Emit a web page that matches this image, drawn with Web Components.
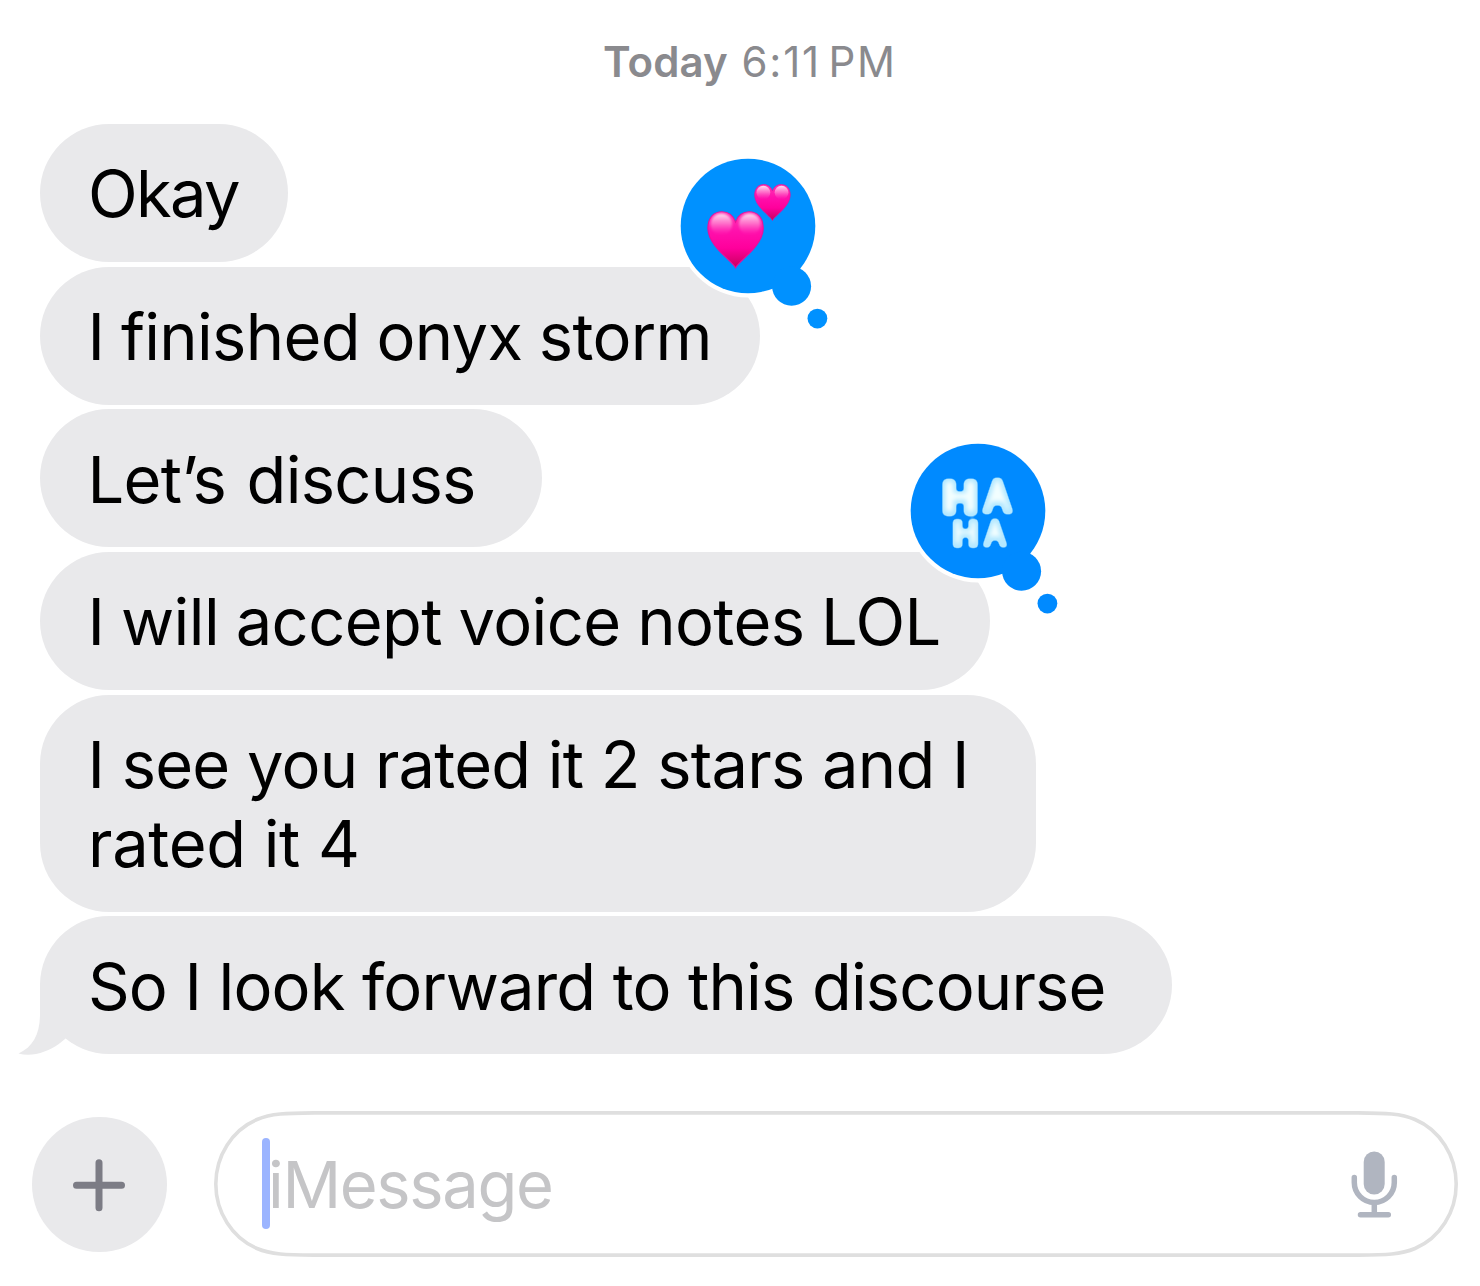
<!DOCTYPE html>
<html lang="en">
<head>
<meta charset="utf-8">
<title>Messages</title>
<style>
html,body{margin:0;background:#fff}
body{width:1480px;height:1286px;overflow:hidden;font-family:Inter,"Liberation Sans",sans-serif}
</style>
</head>
<body>
<chat-app></chat-app>
<script>
const define=(name,html,setup)=>{
  const tpl=document.createElement('template');
  tpl.innerHTML=html;
  customElements.define(name,class extends HTMLElement{
    constructor(){super();this.attachShadow({mode:'open'}).append(tpl.content.cloneNode(true));}
    connectedCallback(){if(setup)setup.call(this,this.shadowRoot);}
  });
};

/* One line of text, tracked so its ink runs from `from` to `to` within the parent box. */
define('tracked-line',`<style>:host{display:block;white-space:nowrap;width:max-content}</style><span><slot></slot></span>`,function(){
  const from=+this.getAttribute('from'),to=+this.getAttribute('to'),t=this.textContent;
  const cs=getComputedStyle(this),c=document.createElement('canvas').getContext('2d');
  c.font=`${cs.fontWeight} ${cs.fontSize} ${cs.fontFamily}`;
  const a=c.measureText(t[0]),b=c.measureText(t[t.length-1]);
  const lsb=-a.actualBoundingBoxLeft,rsb=b.width-b.actualBoundingBoxRight;
  const w=this.getBoundingClientRect().width;
  this.style.letterSpacing=((to-from)-(w-lsb-rsb))/(t.length-1)+'px';
  this.style.marginLeft=(from-lsb)+'px';
});

define('bubble-tail',`<style>:host{display:block;width:60px;height:72px}svg{display:block}</style>
<svg width="60" height="72" viewBox="18 983 60 72"><path fill="#e9e9eb" d="M40 983V1014C40 1034 33 1047 18.500 1053.500C24 1055 30 1055 36 1054C48 1051.500 57 1046 65 1039L77 1022V983Z"/></svg>`);

define('chat-bubble',`<style>
:host{display:block;position:relative;box-sizing:border-box;width:var(--w);padding:30.400px 0 28.600px;background:#e9e9eb;border-radius:69px;font-size:65px;line-height:79px;color:#000}
::slotted(tap-back){position:absolute;right:-68px;top:-113px}
::slotted(bubble-tail){position:absolute;left:-22px;bottom:-.5px}
</style><slot></slot><slot name="extra"></slot>`);

define('tap-back',`<style>:host{display:block;width:152px;height:176px}svg{display:block}</style>
<svg width="152" height="176" viewBox="0 0 152 176">
<circle cx="72" cy="72" r="71.500" fill="#fff"/>
<g class="b"><circle cx="72" cy="72" r="67.300"/><circle cx="115.600" cy="132.200" r="19.500"/><circle cx="141.400" cy="164.600" r="9.900"/></g>
<g class="art"></g></svg>`,function(r){
  const haha=this.getAttribute('kind')==='haha';
  r.querySelector('.b').setAttribute('fill',haha?'#008aff':'#0091ff');
  const heart='M50 100C43 87 1 61 1 30C1 12 11 1 26 1C38 1 46 8 50 19C54 8 62 1 74 1C89 1 99 12 99 30C99 61 57 87 50 100Z';
  r.querySelector('.art').innerHTML=haha?`
<defs><filter id="puff" filterUnits="userSpaceOnUse" x="20" y="20" width="110" height="110" color-interpolation-filters="sRGB">
<feGaussianBlur in="SourceGraphic" stdDeviation="1.500" result="r"/>
<feComponentTransfer in="r" result="body"><feFuncA type="linear" slope="3" intercept="-1.150"/></feComponentTransfer>
<feMorphology in="body" operator="erode" radius="2.500" result="e"/><feGaussianBlur in="e" stdDeviation="1.900" result="eb"/>
<feFlood flood-color="#f2feff"/><feComposite in2="eb" operator="in" result="hl"/>
<feOffset in="hl" dy="-1" result="hlo"/><feComposite in="hlo" in2="body" operator="in" result="glow"/>
<feMerge><feMergeNode in="body"/><feMergeNode in="glow"/></feMerge></filter></defs>
<g filter="url(#puff)" font-family="Inter" stroke-linejoin="round" stroke-linecap="round" fill="#b4e8ff" stroke="#b4e8ff">
<text transform="scale(1.14 1)" x="32.700" y="73" font-size="39.500" font-weight="400" stroke-width="8.800">H</text>
<text x="78.300" y="72" font-size="41" font-weight="400" stroke-width="7" textLength="26.500" lengthAdjust="spacingAndGlyphs">A</text>
<text transform="scale(1.06 1)" x="44.500" y="106" font-size="31" font-weight="400" stroke-width="6.600">H</text>
<text x="78.500" y="106" font-size="32" font-weight="400" stroke-width="5.300" textLength="21" lengthAdjust="spacingAndGlyphs">A</text>
</g>`:`
<defs><linearGradient id="h" x1="0" y1="0" x2="0" y2="1"><stop offset="0" stop-color="#ff3cb4"/><stop offset=".35" stop-color="#ff10ac"/><stop offset=".65" stop-color="#ff009c"/><stop offset="1" stop-color="#c8005c"/></linearGradient>
<linearGradient id="g" x1="0" y1="0" x2="0" y2="1"><stop offset="0" stop-color="#fff" stop-opacity=".85"/><stop offset=".5" stop-color="#ffb0e0" stop-opacity=".5"/><stop offset="1" stop-color="#ff60c8" stop-opacity="0"/></linearGradient>
<filter id="s"><feGaussianBlur stdDeviation="1.800"/></filter>
<g id="heart"><path d="${heart}" fill="url(#h)" stroke="#e8109a" stroke-width="2"/><g filter="url(#s)" fill="url(#g)"><ellipse cx="25" cy="23" rx="19" ry="19"/><ellipse cx="75" cy="23" rx="19" ry="19"/></g></g></defs>
<use href="#heart" transform="translate(31.300 57.200) scale(.565)"/><use href="#heart" transform="translate(78.300 30.200) scale(.363)"/>`;
});

define('time-stamp',`<style>
:host{display:flex;height:124px;box-sizing:border-box;padding-top:36px;font-size:42px;line-height:51px;color:#8a8a8e}
.d{width:735px}.d tracked-line{font-weight:600}.t tracked-line{word-spacing:-6px}
</style><div class="d"><tracked-line from="604" to="727">Today</tracked-line></div><div class="t"><tracked-line from="8.500" to="157">6:11 PM</tracked-line></div>`);

define('plus-button',`<style>:host{display:flex;align-items:center;justify-content:center;width:134.500px;height:134.500px;margin-top:1px;border-radius:50%;background:#e9e9eb;flex:none}</style>
<svg width="54" height="54" viewBox="0 0 54 54"><path d="M27 4.800V49.800M4.500 27.300H49.500" stroke="#7c7c85" stroke-width="7" stroke-linecap="round"/></svg>`);

define('message-field',`<style>
:host{display:grid;width:1244px;height:146px;flex:none}
svg,.in{grid-area:1/1}
.in{display:flex;align-items:center;justify-content:space-between;padding:0 59px 0 48px}
.l{display:flex;align-items:center;height:91px;margin-top:-1px}
i{width:7.500px;height:91px;border-radius:4px;background:#9bb4ff}
.txt{font-size:65px;line-height:79px;color:#c5c5c7;padding-top:2px}
.in svg{grid-area:auto;margin-top:2px}
</style>
<svg width="1244" height="146" viewBox="0 0 1244 146"><path fill="none" stroke="#dfdfdf" stroke-width="3.600" d="M100 1.900H1144C1172 2.200 1187 2.500 1201 8.500C1226 19 1242.200 45 1242.200 73C1242.200 101 1226 127 1201 137.500C1187 143.500 1172 143.800 1144 144.100H100C72 143.800 57 143.500 43 137.500C18 127 1.800 101 1.800 73C1.800 45 18 19 43 8.500C57 2.500 72 2.200 100 1.900Z"/></svg>
<div class="in"><div class="l"><i></i><div class="txt"><tracked-line from="1.500" to="281.500">iMessage</tracked-line></div></div>
<svg width="50" height="70" viewBox="1349 1150 50 70"><rect x="1363.700" y="1151.500" width="21" height="43" rx="10.500" fill="#b0b5c0"/><path d="M1354.300 1177.500V1182.500A20 20 0 0 0 1394.300 1182.500V1177.500M1374.300 1203V1214.500M1360.500 1214.800H1388.300" fill="none" stroke="#b0b5c0" stroke-width="5.500" stroke-linecap="round"/></svg></div>`);

define('chat-app',`<style>
:host{display:block;width:1480px;height:1286px}
main{display:flex;flex-direction:column;gap:4.680px;padding-left:40px;height:987px}
footer{display:flex;align-items:center;gap:47.500px;padding-left:32px}
</style>
<time-stamp></time-stamp>
<main>
<chat-bubble style="--w:248px"><tracked-line from="51" to="199">Okay</tracked-line></chat-bubble>
<chat-bubble style="--w:720px"><tracked-line from="52.500" to="667.500" style="word-spacing:-1px">I finished onyx storm</tracked-line><tap-back slot="extra" kind="hearts"></tap-back></chat-bubble>
<chat-bubble style="--w:502px"><tracked-line from="52.500" to="434" style="word-spacing:3px">Let’s discuss</tracked-line></chat-bubble>
<chat-bubble style="--w:950px"><tracked-line from="52.500" to="898.500" style="word-spacing:-1px">I will accept voice notes LOL</tracked-line><tap-back slot="extra" kind="haha"></tap-back></chat-bubble>
<chat-bubble style="--w:996px"><tracked-line from="52.500" to="924">I see you rated it 2 stars and I</tracked-line><tracked-line from="53" to="317">rated it 4</tracked-line></chat-bubble>
<chat-bubble style="--w:1132px"><tracked-line from="51" to="1063.500">So I look forward to this discourse</tracked-line><bubble-tail slot="extra"></bubble-tail></chat-bubble>
</main>
<footer><plus-button></plus-button><message-field></message-field></footer>`);
</script>
</body>
</html>
